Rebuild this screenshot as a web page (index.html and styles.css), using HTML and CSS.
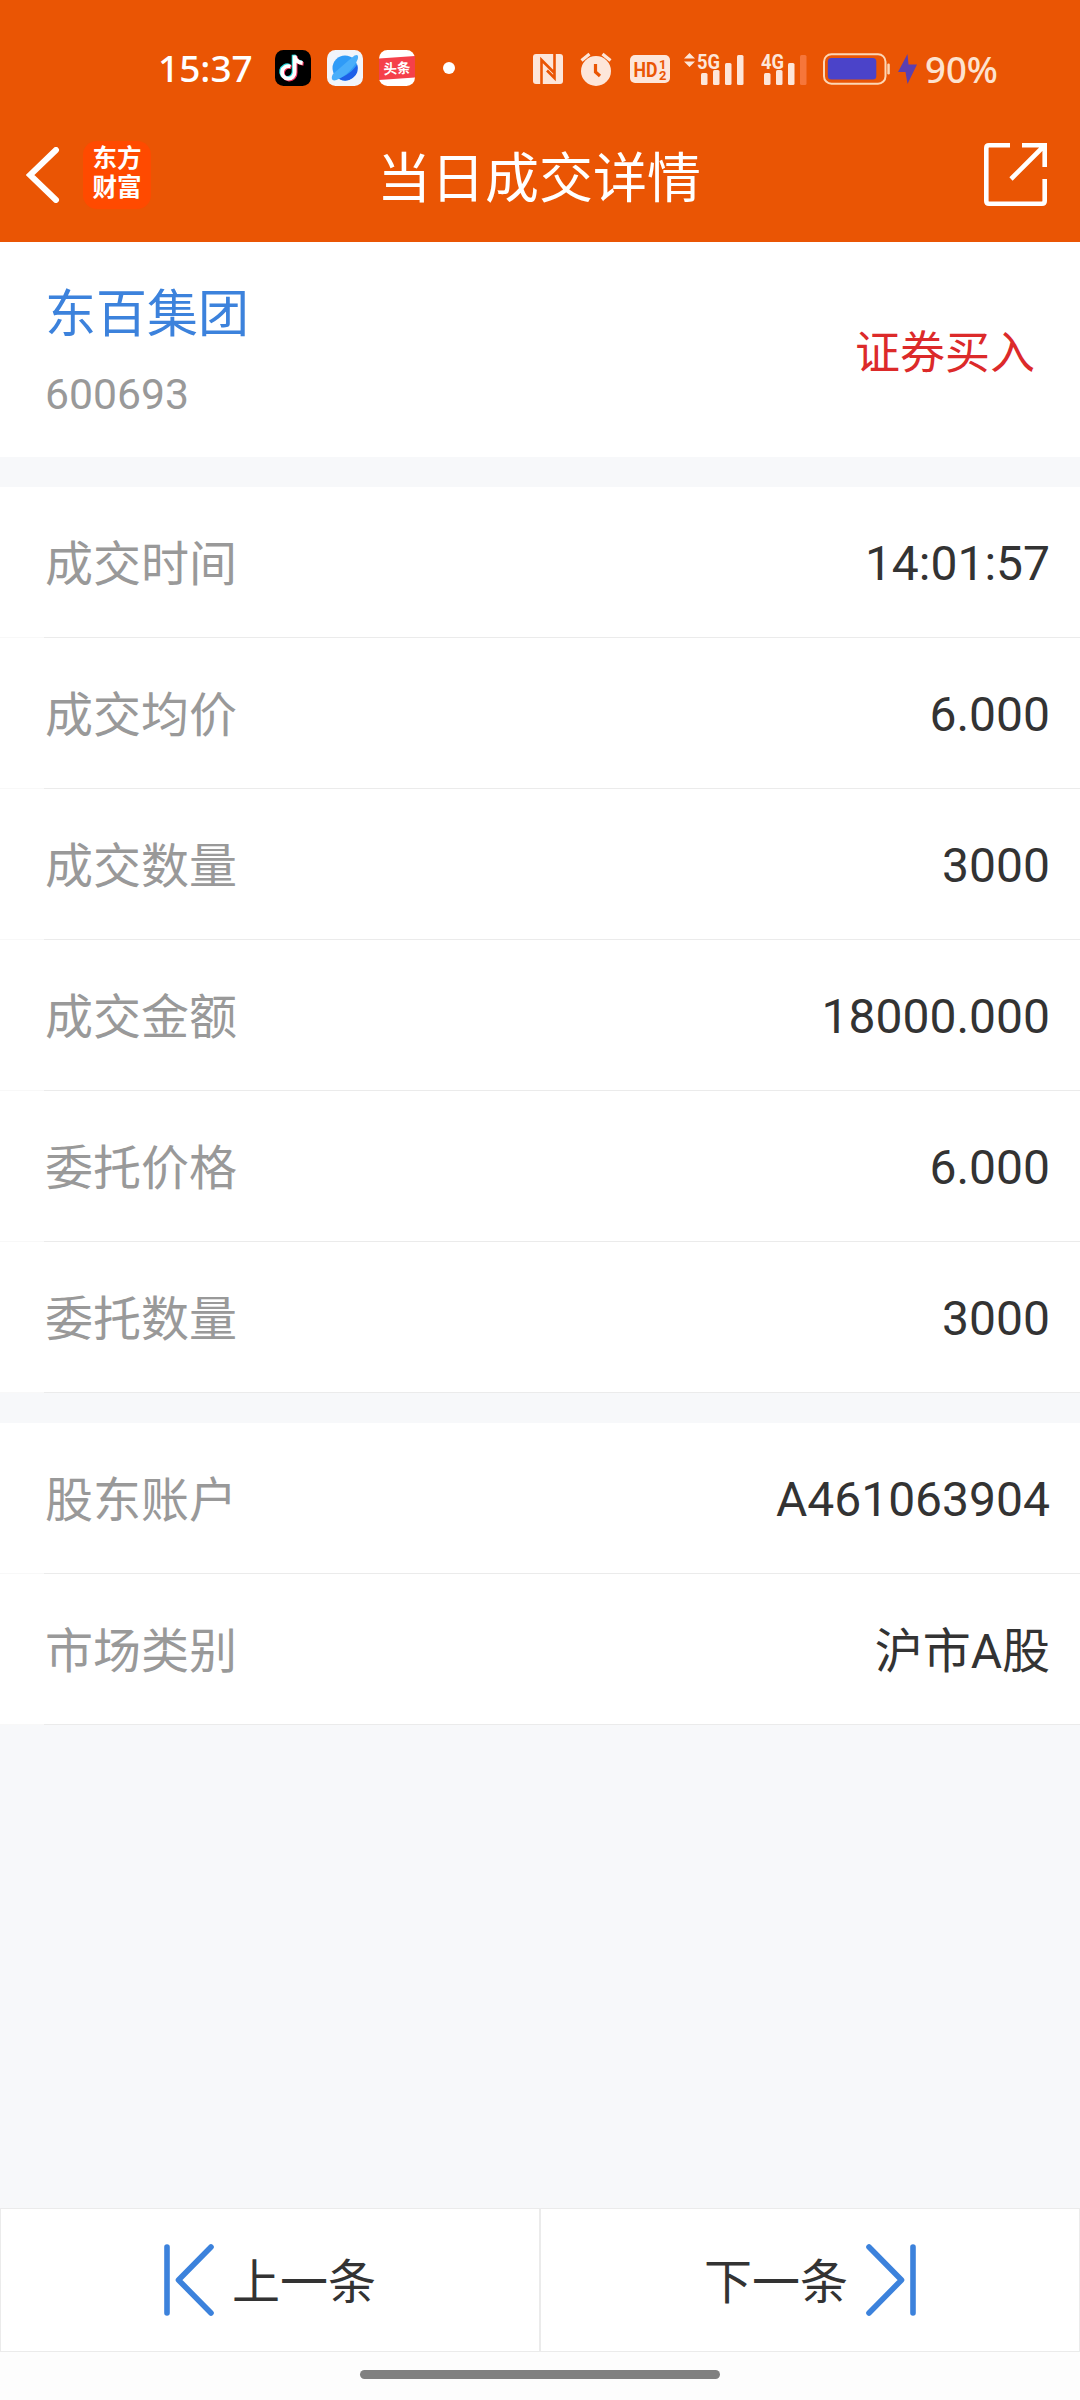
FILE: index.html
```
<!DOCTYPE html>
<html lang="zh-CN">
<head>
    <meta charset="UTF-8">
    <meta name="viewport" content="width=device-width, initial-scale=1.0">
    <title>当日成交详情</title>
    <link rel="stylesheet" href="styles.css">
</head>
<body>
    <header class="header">
        <div class="status-bar">
            <span class="time">15:37</span>
            <div class="apps">
                <svg width="36" height="36" viewBox="0 0 36 36">
                    <rect width="36" height="36" rx="8.5" fill="#000"/>
                    <g fill="none" stroke-width="3.8">
                        <path d="M15.500 16.500a6.300 6.300 0 1 0 4.100 5.500V5.500c.4 4 3.400 7 8 7.500" stroke="#25d9dd" transform="translate(-1 -.8)"/>
                        <path d="M15.500 16.500a6.300 6.300 0 1 0 4.100 5.500V5.500c.4 4 3.400 7 8 7.500" stroke="#f5325b" transform="translate(1 .8)"/>
                        <path d="M15.500 16.500a6.300 6.300 0 1 0 4.100 5.500V5.500c.4 4 3.400 7 8 7.500" stroke="#fff"/>
                    </g>
                </svg>
                <svg width="36" height="36" viewBox="0 0 36 36">
                    <rect width="36" height="36" rx="8.5" fill="#f1f4fa"/>
                    <circle cx="18" cy="18" r="12.500" fill="#2f9bf7"/>
                    <path d="M30.200 14.500A12.500 12.500 0 0 1 11.500 28.600C19 26 26 21 30.200 14.500z" fill="#1e5fe8"/>
                    <path d="M6 24C3.500 28.500 5 31.500 9.500 30C18 27 28 17 30.800 9C32 4.500 29.500 3.500 25 7.500z" fill="#49aefa"/>
                </svg>
                <svg width="36" height="36" viewBox="0 0 36 36">
                    <rect width="36" height="36" rx="8.5" fill="#fff"/>
                    <path d="M0 8.500L36 6V27.500L0 30z" fill="#f5404a"/>
                    <text class="toutiao" x="18" y="23.500" text-anchor="middle" transform="rotate(-3 18 18)" textLength="27" lengthAdjust="spacingAndGlyphs">头条</text>
                </svg>
            </div>
            <span class="dot"></span>
            <div class="signals">
                <svg width="30" height="30" viewBox="0 0 30 30">
                    <rect width="30" height="30" rx="3" fill="#fde6da"/>
                    <path d="M8.500 30V6L21 18.500M21.500 0V24L14 16.500" fill="none" stroke="#ea5504" stroke-width="2.600"/>
                </svg>
                <svg class="alarm" width="32" height="34" viewBox="0 0 32 34">
                    <circle cx="16" cy="19" r="15" fill="#fde6da"/>
                    <path d="M1.500 8.500L9.500 2M30.500 8.500L22.500 2" stroke="#fde6da" stroke-width="3.200"/>
                    <path d="M15.500 12V20L20 24" fill="none" stroke="#ea5504" stroke-width="3.200"/>
                </svg>
                <svg class="hd" width="40" height="28" viewBox="0 0 40 28">
                    <rect width="40" height="28" rx="5" fill="#fde6da"/>
                    <text x="3.500" y="21.500" font-size="21" textLength="24" lengthAdjust="spacingAndGlyphs">HD</text>
                    <text x="29" y="13.500" font-size="13">1</text>
                    <text x="29" y="25" font-size="13">2</text>
                </svg>
                <svg class="net net-5g" width="60" height="34" viewBox="0 0 60 34">
                    <path d="M0 7.500L5.500 2L11 7.500zM0 10.500H11L5.500 16z"/>
                    <text x="13" y="17.500" font-size="20.500" textLength="23" lengthAdjust="spacingAndGlyphs">5G</text>
                    <rect x="17" y="22" width="6.500" height="12" rx="1.500"/>
                    <rect x="29" y="19" width="6.500" height="15" rx="1.500"/>
                    <rect x="41" y="12" width="6.500" height="22" rx="1.500"/>
                    <rect x="53" y="4" width="6.500" height="30" rx="1.500"/>
                </svg>
                <svg class="net net-4g" width="46" height="34" viewBox="0 0 46 34">
                    <text x="0" y="17.500" font-size="20.500" textLength="23" lengthAdjust="spacingAndGlyphs">4G</text>
                    <rect x="3" y="22" width="6.500" height="12" rx="1.500"/>
                    <rect x="15" y="19" width="6.500" height="15" rx="1.500"/>
                    <rect x="27" y="12" width="6.500" height="22" rx="1.500"/>
                    <rect x="39" y="4" width="6.500" height="30" rx="1.500" fill="#f6763a"/>
                </svg>
                <svg class="battery" width="67" height="32" viewBox="0 0 67 32">
                    <rect x="1" y="1.200" width="61.500" height="29.500" rx="7.500" fill="none" stroke="#fdd6b4" stroke-width="2"/>
                    <rect x="4.800" y="5" width="48.500" height="21.500" rx="3.500" fill="#4b43c9"/>
                    <rect x="64.300" y="10.500" width="2.500" height="11" rx="1.200" fill="#fdd6b4"/>
                </svg>
                <svg class="bolt" width="19" height="32" viewBox="0 0 19 32">
                    <path d="M9.500 1L0 19H7.500L9.500 31L19 11.500H10.500z" fill="#5b3fb0"/>
                </svg>
                <span class="percent">90%</span>
            </div>
        </div>
        <div class="nav-bar">
            <div class="nav-left">
                <svg width="34" height="56" viewBox="0 0 34 56">
                    <path d="M30 3L4 28L30 53" fill="none" stroke="#fff" stroke-width="6" stroke-linecap="round"/>
                </svg>
                <div class="logo"><span>东方</span><span>财富</span></div>
            </div>
            <h1 class="title">当日成交详情</h1>
            <svg class="share" width="63" height="63" viewBox="0 0 63 63">
                <path d="M26 2.300H5Q2.300 2.300 2.300 5V58Q2.300 60.700 5 60.700H58Q60.700 60.700 60.700 58V36M38 2.300H60.700V24M60 3L27 36" fill="none" stroke="#fff" stroke-width="4.600"/>
            </svg>
        </div>
    </header>

    <section class="stock">
        <div>
            <div class="stock-name">东百集团</div>
            <div class="stock-code">600693</div>
        </div>
        <div class="direction">证券买入</div>
    </section>

    <section class="list">
        <div class="row"><span class="label">成交时间</span><span class="value">14:01:57</span></div>
        <div class="row"><span class="label">成交均价</span><span class="value">6.000</span></div>
        <div class="row"><span class="label">成交数量</span><span class="value">3000</span></div>
        <div class="row"><span class="label">成交金额</span><span class="value">18000.000</span></div>
        <div class="row"><span class="label">委托价格</span><span class="value">6.000</span></div>
        <div class="row"><span class="label">委托数量</span><span class="value">3000</span></div>
    </section>

    <section class="list">
        <div class="row"><span class="label">股东账户</span><span class="value">A461063904</span></div>
        <div class="row"><span class="label">市场类别</span><span class="value value-cn">沪市A股</span></div>
    </section>

    <footer class="footer">
        <div class="pager">
            <div class="page-btn">
                <svg width="50" height="72" viewBox="0 0 50 72">
                    <path d="M3 3V69M47 3L14.500 36L47 69" />
                </svg>
                <span>上一条</span>
            </div>
            <div class="page-btn">
                <span>下一条</span>
                <svg width="50" height="72" viewBox="0 0 50 72">
                    <path d="M47 3V69M3 3L35.500 36L3 69" />
                </svg>
            </div>
        </div>
        <div class="home-bar"></div>
    </footer>
</body>
</html>
```
FILE: styles.css
```
* {
    box-sizing: border-box;
}
body {
    margin: 0;
    width: 1080px;
    height: 2400px;
    display: flex;
    flex-direction: column;
    background: #f7f8fa;
    font-family: Roboto, "Noto Sans CJK SC", sans-serif;
    color: #333;
}
svg {
    display: block;
    flex-shrink: 0;
}

/* 顶部 */
.header {
    height: 242px;
    background: #ea5504;
    color: #fff;
}
.status-bar {
    display: flex;
    align-items: center;
    height: 107px;
    padding: 29px 0 0 158px;
    font-family: "Noto Sans", sans-serif;
    font-size: 37px;
    line-height: 40px;
}
.time {
    width: 117px;
    font-weight: 500;
}
.apps {
    display: flex;
    gap: 16px;
}
.toutiao {
    font: 700 14px "Noto Sans CJK SC", sans-serif;
    fill: #fff;
}
.dot {
    width: 12px;
    height: 12px;
    margin-left: 28px;
    border-radius: 50%;
    background: #fff;
}
.signals {
    display: flex;
    align-items: center;
    margin-left: 78px;
    padding-top: 2px;
}
.signals text {
    font-family: Roboto, sans-serif;
    font-weight: 700;
}
.alarm {
    margin-left: 17px;
}
.hd {
    margin-left: 18px;
    fill: #ea5504;
}
.net {
    margin-top: -3px;
    fill: #fde6da;
}
.net-5g {
    margin-left: 14px;
}
.net-4g {
    margin-left: 17px;
}
.battery {
    margin-left: 16px;
}
.bolt {
    margin-left: 8px;
}
.percent {
    margin-left: 8px;
    font-size: 36.5px;
    font-weight: 500;
    color: #fde2cf;
}
.nav-bar {
    display: grid;
    grid-template-columns: 1fr auto 1fr;
    align-items: center;
    height: 135px;
    padding: 0 33px 0 26px;
}
.nav-left {
    display: flex;
    align-items: center;
    gap: 23px;
}
.logo {
    display: flex;
    flex-direction: column;
    align-items: center;
    justify-content: center;
    width: 68px;
    height: 68px;
    padding-bottom: 3px;
    border-radius: 14px;
    background: #ff4a00;
    font-size: 24.5px;
    font-weight: 700;
    line-height: 29px;
}
.title {
    margin: 0 0 0 5px;
    padding-top: 10px;
    font-size: 54px;
    font-weight: 400;
    line-height: 80px;
}
.share {
    justify-self: end;
}

/* 股票信息 */
.stock {
    display: flex;
    align-items: center;
    justify-content: space-between;
    height: 215px;
    margin-bottom: 30px;
    padding: 0 45px;
    background: #fff;
}
.stock-name {
    padding-top: 11px;
    font-size: 51px;
    line-height: 78px;
    color: #3c82dc;
}
.stock-code {
    font-size: 42.7px;
    line-height: 80px;
    color: #999;
}
.direction {
    font-size: 45px;
    color: #dc2a2a;
}

/* 明细列表 */
.list {
    margin-bottom: 30px;
    background: #fff;
}
.row {
    display: flex;
    align-items: center;
    justify-content: space-between;
    height: 151px;
    padding: 0 30px 0 45px;
    border-bottom: 1px solid;
    border-image: linear-gradient(90deg, #f8f8f8 45px, #ebebeb 45px) 1;
    font-size: 48px;
}
.label {
    padding-bottom: 4px;
    color: #999;
}
.value {
    padding-top: 2px;
}
.value-cn {
    padding: 0 0 4px;
}

/* 底部翻页 */
.footer {
    height: 192px;
    margin-top: auto;
    background: #fdfdfd;
}
.pager {
    display: flex;
}
.page-btn {
    display: flex;
    flex: 1;
    align-items: center;
    justify-content: center;
    gap: 18px;
    height: 144px;
    border: 1px solid #ebebeb;
    background: #fff;
    font-size: 48px;
}
.page-btn span {
    padding-bottom: 5px;
}
.page-btn path {
    fill: none;
    stroke: #3c82dc;
    stroke-width: 5.6;
    stroke-linecap: round;
    stroke-linejoin: round;
}
.home-bar {
    width: 360px;
    height: 9px;
    margin: 18px auto 0;
    border-radius: 5px;
    background: #808080;
}
```
